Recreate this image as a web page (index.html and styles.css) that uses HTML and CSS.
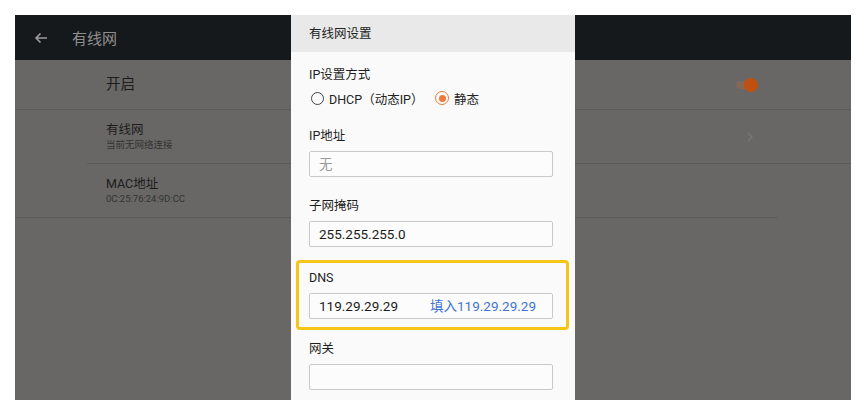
FILE: index.html
```html
<!DOCTYPE html>
<html lang="zh">
<head>
<meta charset="utf-8">
<link rel="stylesheet" href="styles.css">
</head>
<body>
<div class="screen">
  <div class="appbar">
    <svg class="back" width="14" height="12" viewBox="0 0 14 12"><path d="M13 6H2M6.5 1.5L2 6l4.5 4.5" fill="none" stroke="#9b9b9b" stroke-width="1.6"/></svg>
    <span class="appbar-title">有线网</span>
  </div>
  <div class="list">
    <div class="row row-switch">
      <span class="row-title big">开启</span>
      <span class="toggle"><span class="thumb"></span></span>
    </div>
    <div class="row row-link">
      <div>
        <div class="row-title">有线网</div>
        <div class="row-sub">当前无网络连接</div>
      </div>
      <svg class="chev" width="6" height="10" viewBox="0 0 6 10"><path d="M1 1l4 4-4 4" fill="none" stroke="#7a7a7a" stroke-width="1.1"/></svg>
    </div>
    <div class="row row-info">
      <div>
        <div class="row-title">MAC地址</div>
        <div class="row-sub">0C:25:76:24:9D:CC</div>
      </div>
    </div>
  </div>

  <div class="dialog">
    <div class="dialog-head">有线网设置</div>
    <div class="dialog-body">
      <div class="label">IP设置方式</div>
      <div class="radios">
        <span class="radio"></span><span class="radio-text dhcp">DHCP（动态IP）</span>
        <span class="radio checked"><span class="dot"></span></span><span class="radio-text">静态</span>
      </div>
      <div class="field">
        <div class="label">IP地址</div>
        <div class="input placeholder">无</div>
      </div>
      <div class="field">
        <div class="label">子网掩码</div>
        <div class="input">255.255.255.0</div>
      </div>
      <div class="highlight">
        <div class="label">DNS</div>
        <div class="input"><span class="val">119.29.29.29</span><span class="hint">填入119.29.29.29</span></div>
      </div>
      <div class="field">
        <div class="label">网关</div>
        <div class="input"></div>
      </div>
    </div>
  </div>
</div>
</body>
</html>
```

FILE: styles.css
```css
* { box-sizing: border-box; }
html, body { margin: 0; padding: 0; background: #ffffff; }
body {
  width: 866px; height: 400px; overflow: hidden;
  font-family: Roboto, "Noto Sans CJK SC", sans-serif;
}
.screen {
  position: relative;
  margin: 15px 15px 0 15px;
  height: 385px;
  background: #686766;
}
.appbar {
  height: 45px;
  background: #16191b;
  display: flex;
  align-items: center;
  padding-left: 19px;
}
.back { margin-right: 24px; }
.appbar-title { color: #8f8f8f; font-size: 15px; }
.row {
  display: flex;
  align-items: center;
  justify-content: space-between;
  padding-left: 91px;
  border-bottom: 1px solid #5c5b5a;
}
.row-switch { height: 50px; padding-right: 95px; }
.row-link { height: 54px; padding-right: 98px; margin-left: 72px; padding-left: 19px; }
.row-info { height: 54px; padding-right: 60px; margin-right: 73px; }
.row-title { color: #1c1c1c; font-size: 12.5px; line-height: 16px; }
.row-title.big { font-size: 14.5px; }
.row-sub { color: #333; font-size: 9.5px; line-height: 13px; }
.toggle {
  position: relative;
  width: 20px; height: 8px;
  border-radius: 4px;
  background: #83685a;
}
.thumb {
  position: absolute; right: -2px; top: -3px;
  width: 14px; height: 14px; border-radius: 50%;
  background: #c1500e;
}
.dialog {
  position: absolute;
  left: 276px; top: 0;
  width: 284px; height: 385px;
  background: #fafafa;
}
.dialog-head {
  height: 37px;
  background: #e9e9e9;
  color: #222;
  font-size: 12.5px;
  line-height: 37px;
  padding-left: 18px;
}
.dialog-body { padding: 14px 22px 0 18px; }
.label {
  height: 18px; line-height: 18px;
  color: #1e1e1e; font-size: 12.5px;
}
.radios {
  display: flex; align-items: center;
  height: 18px; margin-top: 5px; margin-bottom: 20px;
}
.radio {
  width: 13px; height: 13px; border-radius: 50%;
  border: 1.4px solid #444;
  margin-left: 2px; margin-right: 5px;
  display: flex; align-items: center; justify-content: center;
}
.radio.checked { border-color: #ef7a3c; margin-left: 0; width: 14px; height: 14px; }
.dhcp { width: 106px; }
.dot { width: 7px; height: 7px; border-radius: 50%; background: #ef7a3c; }
.radio-text { font-size: 12.5px; color: #222; }
.field { margin-bottom: 20px; }
.field .label, .highlight .label { margin-bottom: 6px; }
.input {
  height: 26px;
  border: 1px solid #c9c9c9;
  border-radius: 2px;
  background: #fcfcfc;
  padding-left: 9px;
  font-size: 13.5px;
  line-height: 24px;
  color: #1b1b1b;
  display: flex;
  align-items: center;
}
.input.placeholder { color: #9a9a9a; }
.val { width: 111px; }
.hint { color: #3f74d2; }
.highlight {
  margin: -7px -16px 10px -13px;
  padding: 6px 13px 8px 10px;
  border: 3px solid #f5c518;
  border-radius: 4px;
}
```
